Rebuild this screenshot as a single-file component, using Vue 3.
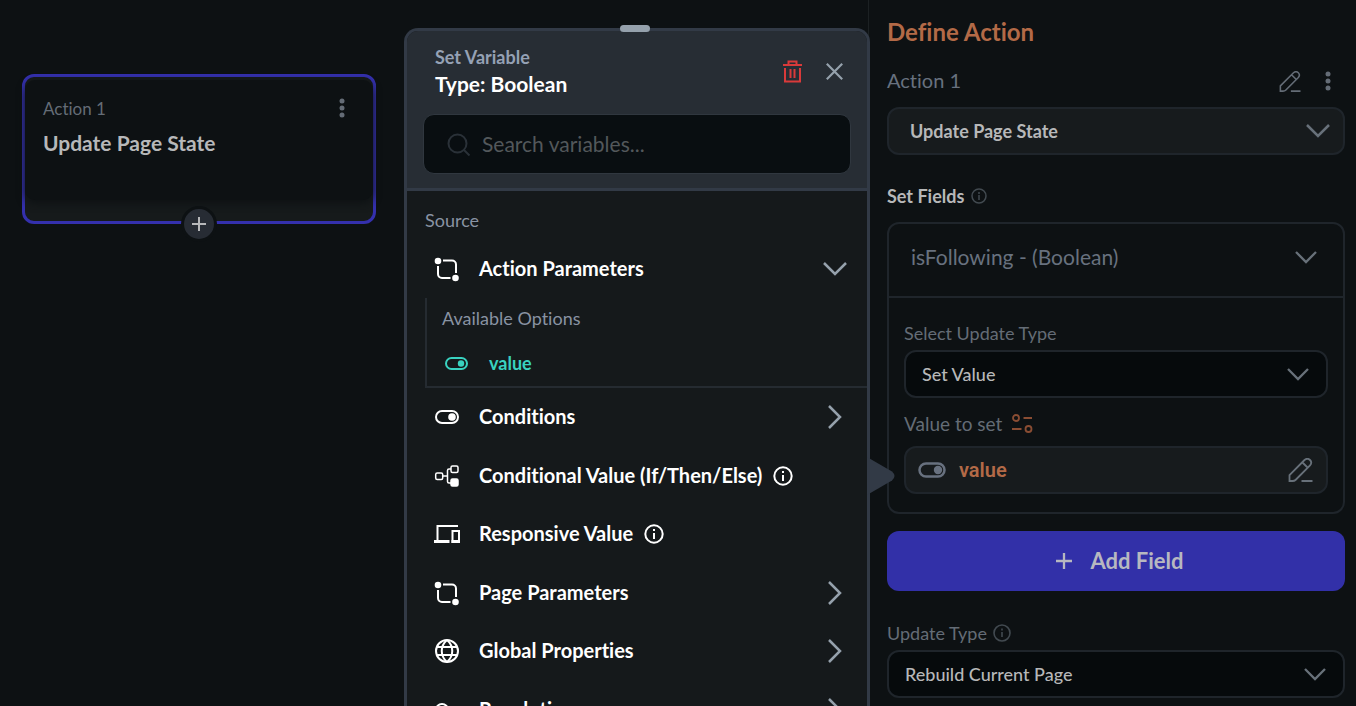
<script setup>
import { ref } from 'vue'

const search = ref('')
const rows = [
  { id: 'conditions', label: 'Conditions', icon: 'toggle', chevron: true },
  { id: 'conditional', label: 'Conditional Value (If/Then/Else)', icon: 'branch', info: true },
  { id: 'responsive', label: 'Responsive Value', icon: 'devices', info: true },
  { id: 'page', label: 'Page Parameters', icon: 'params', chevron: true },
  { id: 'global', label: 'Global Properties', icon: 'globe', chevron: true },
  { id: 'revolution', label: 'Revolution', icon: 'circle', chevron: true }
]
</script>

<template>
  <div class="app">
    <main class="canvas">
      <section class="card">
        <div class="card-body">
          <div class="card-text">
            <span class="card-kicker">Action 1</span>
            <h2 class="card-title">Update Page State</h2>
          </div>
          <button class="icon-btn" type="button" aria-label="Action menu">
            <svg width="6" height="20" viewBox="0 0 6 20" fill="#646c76"><circle cx="3" cy="3" r="2.5" /><circle cx="3" cy="10" r="2.5" /><circle cx="3" cy="17" r="2.5" /></svg>
          </button>
        </div>
        <button class="card-add" type="button" aria-label="Add action">
          <svg width="14" height="14" viewBox="0 0 14 14" stroke="#b7b8ba" stroke-width="2"><path d="M7 0v14M0 7h14" /></svg>
        </button>
      </section>
    </main>

    <section class="popup">
      <div class="handle"></div>
      <div class="arrow">
        <svg width="28" height="38" viewBox="0 0 28 38"><path d="M0 0L25 14.500Q30 19 25 23.500L0 38Z" fill="#323a46" /></svg>
      </div>
      <header class="popup-head">
        <div class="popup-title-row">
          <div class="popup-titles">
            <span class="popup-kicker">Set Variable</span>
            <h2 class="popup-title">Type: Boolean</h2>
          </div>
          <button class="icon-btn" type="button" aria-label="Delete variable">
            <svg width="19" height="23" viewBox="0 0 19 23" fill="none" stroke="#d93a3a" stroke-width="2"><path d="M0 5h19M5.500 5V1.500h8V5M2 8v13.500h15V8M7.500 9v9M11.500 9v9" /></svg>
          </button>
          <button class="icon-btn" type="button" aria-label="Close">
            <svg width="17" height="17" viewBox="0 0 17 17" fill="none" stroke="#95a1ac" stroke-width="2.2"><path d="M.8.8l15.4 15.4M16.2.8L.8 16.2" /></svg>
          </button>
        </div>
        <label class="search">
          <svg width="24" height="24" viewBox="0 0 24 24" fill="none" stroke="#2a3138" stroke-width="2"><circle cx="10.500" cy="11.500" r="9" /><path d="M17 18l5.500 5.500" /></svg>
          <input v-model="search" type="text" placeholder="Search variables..." aria-label="Search variables" />
        </label>
      </header>
      <div class="popup-body">
        <p class="source">Source</p>
        <button class="row" type="button">
          <span class="row-icon">
            <svg width="26" height="26" viewBox="0 0 26 26" fill="none" stroke="#fff" stroke-width="2"><circle cx="4" cy="5" r="3.300" fill="#fff" stroke="none" /><circle cx="21.500" cy="22" r="3.300" fill="#fff" stroke="none" /><path d="M9 4.500h9a4 4 0 0 1 4 4V17M4 10v8a4 4 0 0 0 4 4H16.500" /></svg>
          </span>
          <span class="row-label">Action Parameters</span>
          <span class="row-end"><svg width="24" height="14" viewBox="0 0 24 14" fill="none" stroke="#95a1ac" stroke-width="2.500"><path d="M1 1l11 11L23 1" /></svg></span>
        </button>
        <div class="options">
          <p class="options-title">Available Options</p>
          <button class="option" type="button">
            <svg width="23" height="13" viewBox="0 0 23 13" fill="none" stroke="#39d2c0" stroke-width="2"><rect x="1" y="1" width="21" height="11" rx="5.500" /><circle cx="16" cy="6.500" r="3.200" fill="#39d2c0" stroke="none" /></svg>
            <span>value</span>
          </button>
        </div>
        <div class="rows">
          <button v-for="row in rows" :key="row.id" class="row" type="button">
            <span class="row-icon">
              <svg v-if="row.icon === 'toggle'" width="26" height="14" viewBox="0 0 26 14" fill="none" stroke="#fff" stroke-width="2"><rect x="2" y="1" width="22" height="12" rx="6" /><circle cx="18" cy="7" r="3.800" fill="#fff" stroke="none" /></svg>
              <svg v-else-if="row.icon === 'branch'" width="26" height="22" viewBox="0 0 26 22" fill="none" stroke="#fff" stroke-width="1.500"><rect x="1.700" y="8" width="7" height="6.500" rx="1.500" /><path d="M9 11h4.500M17 4h-2q-1.500 0-1.500 1.500v11q0 1.500 1.500 1.500h2" /><rect x="17" y="1" width="7" height="6.500" rx="1.500" /><rect x="17" y="14" width="7" height="7" rx="1.500" fill="#fff" /></svg>
              <svg v-else-if="row.icon === 'devices'" width="26" height="18" viewBox="0 0 26 18" fill="none" stroke="#fff" stroke-width="2"><path d="M24 1H3.500v14" /><path d="M0 16.500h15.500" stroke-width="3" /><rect x="18.500" y="6" width="6.500" height="11" /><path d="M17.500 16.500H26" stroke-width="3" /></svg>
              <svg v-else-if="row.icon === 'params'" width="26" height="26" viewBox="0 0 26 26" fill="none" stroke="#fff" stroke-width="2"><circle cx="4" cy="5" r="3.300" fill="#fff" stroke="none" /><circle cx="21.500" cy="22" r="3.300" fill="#fff" stroke="none" /><path d="M9 4.500h9a4 4 0 0 1 4 4V17M4 10v8a4 4 0 0 0 4 4H16.500" /></svg>
              <svg v-else-if="row.icon === 'globe'" width="26" height="24" viewBox="0 0 26 24" fill="none" stroke="#fff" stroke-width="2"><circle cx="13" cy="12" r="11" /><path d="M3 8h20M3 16h20M13 1c-7 6-7 16 0 22c7-6 7-16 0-22" /></svg>
              <svg v-else width="26" height="14" viewBox="0 0 26 14" fill="none" stroke="#fff" stroke-width="2"><circle cx="8" cy="7" r="6" /></svg>
            </span>
            <span class="row-label">{{ row.label }}</span>
            <svg v-if="row.info" width="20" height="20" viewBox="0 0 20 20" fill="none" stroke="#fff" stroke-width="2"><circle cx="10" cy="10" r="8.700" /><path d="M10 9v6M10 5v2" /></svg>
            <span v-if="row.chevron" class="row-end"><svg width="14" height="24" viewBox="0 0 14 24" fill="none" stroke="#95a1ac" stroke-width="2.500"><path d="M1 1l11 11L1 23" /></svg></span>
          </button>
        </div>
      </div>
    </section>

    <aside class="panel">
      <h1 class="panel-title">Define Action</h1>
      <div class="action-row">
        <span class="action-name">Action 1</span>
        <button class="icon-btn" type="button" aria-label="Rename action">
          <svg width="22" height="21" viewBox="0 0 24 24" fill="none" stroke="#646c76" stroke-width="1.800"><path d="M1 23v-6L16 2q3-2.500 5.500 0t0 5.500L7 22q-1 1-3 1zM14 4.500l5.500 5.500M13 23h11" /></svg>
        </button>
        <button class="icon-btn" type="button" aria-label="More options">
          <svg width="6" height="20" viewBox="0 0 6 20" fill="#646c76"><circle cx="3" cy="3" r="2.500" /><circle cx="3" cy="10" r="2.500" /><circle cx="3" cy="17" r="2.500" /></svg>
        </button>
      </div>
      <div class="select raised">
        <select aria-label="Action type"><option>Update Page State</option></select>
        <svg width="24" height="14" viewBox="0 0 24 14" fill="none" stroke="#68717a" stroke-width="2.500"><path d="M1 1l11 11L23 1" /></svg>
      </div>
      <div class="fields-label">
        <span>Set Fields</span>
        <svg width="16" height="16" viewBox="0 0 16 16" fill="none" stroke="#424a50" stroke-width="1.500"><circle cx="8" cy="8" r="7" /><path d="M8 7v5M8 4v2" /></svg>
      </div>
      <section class="fields">
        <button class="fields-head" type="button">
          <span>isFollowing - (Boolean)</span>
          <svg width="22" height="13" viewBox="0 0 22 13" fill="none" stroke="#68717a" stroke-width="2.300"><path d="M1 1l10 10L21 1" /></svg>
        </button>
        <div class="fields-body">
          <label class="label" for="update-kind">Select Update Type</label>
          <div class="select inner">
            <select id="update-kind"><option>Set Value</option></select>
            <svg width="22" height="13" viewBox="0 0 22 13" fill="none" stroke="#68717a" stroke-width="2.300"><path d="M1 1l10 10L21 1" /></svg>
          </div>
          <div class="value-label">
            <span>Value to set</span>
            <svg width="21" height="19" viewBox="0 0 21 19" fill="none" stroke="#8a4d33" stroke-width="1.800"><circle cx="4" cy="4" r="3" /><path d="M11.500 4H20M0 15h9.500" /><circle cx="16.500" cy="15" r="3" /></svg>
          </div>
          <div class="value-box">
            <svg width="28" height="16" viewBox="0 0 28 16" fill="none" stroke="#68717f" stroke-width="2.500"><rect x="1.500" y="1.500" width="25" height="13" rx="6.500" /><circle cx="20" cy="8" r="4.200" fill="#68717f" stroke="none" /></svg>
            <span class="value-name">value</span>
            <button class="icon-btn" type="button" aria-label="Edit value">
              <svg width="25" height="24" viewBox="0 0 24 24" fill="none" stroke="#68717a" stroke-width="1.800"><path d="M1 23v-6L16 2q3-2.500 5.500 0t0 5.500L7 22q-1 1-3 1zM14 4.500l5.500 5.500M13 23h11" /></svg>
            </button>
          </div>
        </div>
      </section>
      <button class="add-field" type="button">
        <svg width="16" height="16" viewBox="0 0 16 16" stroke="#b7b8c0" stroke-width="2.300"><path d="M8 0v16M0 8h16" /></svg>
        <span>Add Field</span>
      </button>
      <div class="update-label">
        <label for="rebuild">Update Type</label>
        <svg width="18" height="18" viewBox="0 0 18 18" fill="none" stroke="#424a50" stroke-width="1.600"><circle cx="9" cy="9" r="8" /><path d="M9 8v5M9 4.500v2" /></svg>
      </div>
      <div class="select last">
        <select id="rebuild"><option>Rebuild Current Page</option></select>
        <svg width="22" height="13" viewBox="0 0 22 13" fill="none" stroke="#68717a" stroke-width="2.300"><path d="M1 1l10 10L21 1" /></svg>
      </div>
    </aside>
  </div>
</template>

<style>
body {
  margin: 0;
  background: #0d1113;
}
</style>

<style scoped>
.app,
.app * {
  box-sizing: border-box;
}

.app {
  display: flex;
  height: 100vh;
  overflow: hidden;
  background: #0d1113;
  font-family: Lato, "Open Sans", sans-serif;
  font-variant-ligatures: none;
}

h1,
h2,
p {
  margin: 0;
}

svg {
  display: block;
  flex: none;
}

button,
input,
select {
  margin: 0;
  padding: 0;
  border: 0;
  background: none;
  color: inherit;
  font: inherit;
  font-variant-ligatures: none;
  text-align: left;
}

.icon-btn {
  flex: none;
}

.canvas {
  flex: 1;
  min-width: 0;
  padding: 74px 28px 0 22px;
}

.card {
  position: relative;
  height: 150px;
  padding-top: 3px;
  border: 3px solid #3430ad;
  border-radius: 12px;
  background: #161a1b;
}

.card-body {
  display: flex;
  align-items: flex-start;
  justify-content: space-between;
  height: 120px;
  padding: 18px 28px 0 18px;
  border-radius: 10px;
  background: #0d1113;
  box-shadow: 0 3px 8px #0d1113;
}

.card-kicker {
  display: block;
  color: #646c76;
  font-size: 17px;
  line-height: 22px;
}

.card-title {
  padding-top: 9px;
  color: #b7b8b9;
  font-size: 21px;
  font-weight: 700;
  line-height: 28px;
}

.card-add {
  position: absolute;
  bottom: -21px;
  left: 50%;
  display: grid;
  place-items: center;
  width: 36px;
  height: 36px;
  margin-left: -18px;
  border: 3px solid #0d1113;
  border-radius: 50%;
  background: #272c34;
}

.popup {
  position: relative;
  z-index: 1;
  display: flex;
  flex: none;
  flex-direction: column;
  width: 466px;
  margin: 28px -2px 0 0;
  border: 3px solid #323a46;
  border-bottom: 0;
  border-radius: 14px 14px 0 0;
  background: #15191b;
}

.handle {
  position: absolute;
  top: -6px;
  left: 50%;
  width: 30px;
  height: 7px;
  margin-left: -17px;
  border-radius: 4px;
  background: #95a1ac;
}

.arrow {
  position: absolute;
  top: 426px;
  left: 100%;
}

.popup-head {
  padding: 13px 16px 14px;
  border-bottom: 3px solid #323a46;
  border-radius: 11px 11px 0 0;
  background: #272d34;
}

.popup-title-row {
  display: flex;
  align-items: center;
  gap: 24px;
  height: 54px;
  padding: 0 8px 0 12px;
}

.popup-titles {
  flex: 1;
}

.popup-kicker {
  display: block;
  color: #95a1b5;
  font-size: 18px;
  font-weight: 700;
  line-height: 26px;
}

.popup-title {
  color: #fff;
  font-size: 21px;
  font-weight: 700;
  line-height: 28px;
}

.search {
  display: flex;
  align-items: center;
  gap: 11px;
  height: 60px;
  margin-top: 16px;
  padding: 0 23px;
  border: 1px solid #30373f;
  border-radius: 11px;
  background: #090e11;
}

.search input {
  flex: 1;
  min-width: 0;
  padding-bottom: 2px;
  outline: 0;
  color: #fff;
  font-size: 21px;
}

.search input::placeholder {
  color: #53585b;
  opacity: 1;
}

.popup-body {
  flex: 1;
  min-height: 0;
  overflow: hidden;
  padding-left: 18px;
}

.source {
  height: 48px;
  padding-top: 17px;
  color: #8993a3;
  font-size: 18px;
  line-height: 24px;
}

.row {
  display: flex;
  align-items: center;
  width: 100%;
  height: 59px;
  padding-left: 9px;
  color: #fff;
}

.rows {
  display: grid;
  grid-template-rows: repeat(6, 1fr);
  height: 351px;
}

.rows .row {
  height: 100%;
}

.row-icon {
  flex: none;
  width: 26px;
  margin-right: 19px;
}

.row-label {
  margin-right: 11px;
  padding-bottom: 2px;
  font-size: 20px;
  font-weight: 700;
  line-height: 24px;
}

.row-end {
  display: grid;
  place-items: center;
  width: 24px;
  margin-right: 20px;
  margin-left: auto;
}

.options {
  height: 90px;
  padding: 8px 0 0 15px;
  border-bottom: 2px solid #252b31;
  border-left: 2px solid #252b31;
  color: #8993a3;
}

.options-title {
  font-size: 18px;
  line-height: 24px;
}

.option {
  display: flex;
  align-items: center;
  gap: 21px;
  margin-top: 21px;
  padding-left: 3px;
  color: #39d2c0;
  font-size: 18px;
  font-weight: 700;
  line-height: 24px;
}

.panel {
  flex: none;
  width: 488px;
  padding: 16px 11px 0 18px;
  border-left: 1px solid #1c2123;
}

.panel-title {
  color: #b36a47;
  font-size: 24px;
  font-weight: 700;
  line-height: 32px;
}

.action-row {
  display: flex;
  align-items: center;
  gap: 24px;
  height: 34px;
  margin-top: 16px;
  padding-right: 14px;
  color: #68717f;
}

.action-name {
  flex: 1;
  padding-bottom: 2px;
  font-size: 20px;
  line-height: 28px;
}

.select {
  display: grid;
  align-items: center;
  height: 48px;
  border: 2px solid #1f252b;
  border-radius: 12px;
  background: #060a0c;
  color: #b7b8b9;
  font-size: 18px;
  font-weight: 500;
}

.select > * {
  grid-area: 1 / 1;
}

.select select {
  width: 100%;
  height: 44px;
  padding-left: 16px;
  outline: 0;
  appearance: none;
}

.select svg {
  justify-self: end;
  margin-right: 17px;
  pointer-events: none;
}

.raised {
  margin-top: 9px;
  background: #171b1d;
  font-weight: 700;
}

.raised select {
  padding-left: 21px;
}

.raised svg {
  margin-right: 13px;
}

.fields-label {
  display: flex;
  align-items: center;
  gap: 7px;
  margin-top: 29px;
  color: #b7b8b9;
  font-size: 18px;
  font-weight: 700;
  line-height: 24px;
}

.fields {
  margin-top: 14px;
  border: 2px solid #1f252b;
  border-radius: 12px;
}

.fields-head {
  display: flex;
  align-items: center;
  justify-content: space-between;
  width: 100%;
  height: 74px;
  padding: 0 26px 6px 22px;
  border-bottom: 2px solid #1f252b;
  color: #68717f;
  font-size: 21px;
}

.fields-head span {
  padding-bottom: 2px;
}

.fields-body {
  padding: 23px 15px 18px;
}

.label {
  display: block;
  color: #646c76;
  font-size: 18px;
  line-height: 24px;
}

.inner {
  margin-top: 5px;
}

.value-label {
  display: flex;
  align-items: center;
  gap: 10px;
  height: 48px;
  padding-top: 2px;
  color: #646c76;
  font-size: 19px;
}

.value-box {
  display: flex;
  align-items: center;
  gap: 13px;
  height: 48px;
  padding: 0 13px 0 12px;
  border: 2px solid #1f252b;
  border-radius: 12px;
  background: #171b1d;
}

.value-name {
  flex: 1;
  color: #b36a47;
  font-family: Roboto, sans-serif;
  font-size: 20px;
  font-weight: 600;
}

.add-field {
  display: flex;
  align-items: center;
  justify-content: center;
  gap: 18px;
  width: 100%;
  height: 60px;
  margin-top: 17px;
  padding-left: 8px;
  border-radius: 12px;
  background: #3230a8;
  color: #b7b8c0;
  font-size: 22px;
  font-weight: 700;
}

.add-field span {
  padding-bottom: 2px;
}

.update-label {
  display: flex;
  align-items: center;
  gap: 6px;
  margin-top: 30px;
  color: #646c76;
  font-size: 18px;
  line-height: 24px;
}

.last {
  margin-top: 5px;
}
</style>
